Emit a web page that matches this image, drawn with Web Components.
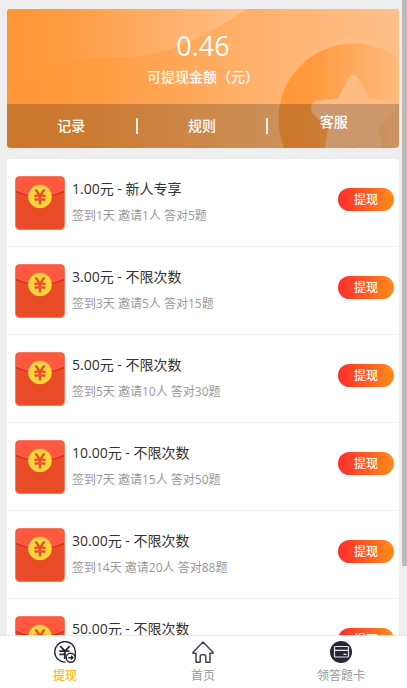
<!DOCTYPE html>
<html lang="zh-CN">
<head>
<meta charset="utf-8">
<meta name="viewport" content="width=device-width, initial-scale=1">
<title>提现</title>
<style>
  body { margin: 0; background: #eee; font-family: "Open Sans", "Noto Sans CJK SC", sans-serif; font-size: 14px; color: #333; }
</style>
</head>
<body>
<cash-app>
  <balance-card amount="0.46" label="可提现金额（元）"></balance-card>
  <cash-list>
    <cash-row heading="1.00元 - 新人专享">签到1天 邀请1人 答对5题</cash-row>
    <cash-row heading="3.00元 - 不限次数">签到3天 邀请5人 答对15题</cash-row>
    <cash-row heading="5.00元 - 不限次数">签到5天 邀请10人 答对30题</cash-row>
    <cash-row heading="10.00元 - 不限次数">签到7天 邀请15人 答对50题</cash-row>
    <cash-row heading="30.00元 - 不限次数">签到14天 邀请20人 答对88题</cash-row>
    <cash-row heading="50.00元 - 不限次数"></cash-row>
  </cash-list>
  <tab-bar slot="footer">
    <tab-item active>
      <svg slot="icon" viewBox="0 0 22 22" width="22" height="22" fill="none" stroke="#292838" stroke-width="1.4" aria-hidden="true">
        <path d="M11.5 21.1A10.3 10.3 0 1 1 21.3 11V16"/>
        <path d="M6.3 5.2L11 10.2L15.7 5.2M5.3 10.2H15.5M5.3 13.4H12M10.8 10.2V18" stroke-width="1.8"/>
        <circle cx="16.7" cy="16.7" r="4.5" fill="#fff"/>
        <path d="M14.2 16.7H18.8M17 14.8L19 16.7L17 18.6"/>
      </svg>提现</tab-item>
    <tab-item>
      <svg slot="icon" viewBox="0 0 22 22" width="22" height="22" fill="none" stroke="#444252" stroke-width="1.5" stroke-linejoin="round" aria-hidden="true">
        <path d="M11 1L1 11.2V12.2H4V21.2H8.2V15.5Q8.2 13.8 9.8 13.8H12.2Q13.8 13.8 13.8 15.5V21.2H18V12.2H21V11.2Z"/>
      </svg>首页</tab-item>
    <tab-item>
      <svg slot="icon" viewBox="0 0 22 22" width="22" height="22" aria-hidden="true">
        <circle cx="11" cy="11" r="11" fill="#26263a"/>
        <rect x="4.5" y="5.5" width="14" height="10.5" rx="1" fill="none" stroke="#e4e6e2" stroke-width="1.2"/>
        <path d="M4.5 9.3H18.5M13.5 13.4H16.5" stroke="#e4e6e2" stroke-width="1.3"/>
      </svg>领答题卡</tab-item>
  </tab-bar>
</cash-app>

<script>
const define = (name, html, setup) => {
  const template = document.createElement('template');
  template.innerHTML = html;
  customElements.define(name, class extends HTMLElement {
    constructor() {
      super();
      this.attachShadow({ mode: 'open' }).append(template.content.cloneNode(true));
    }
    connectedCallback() { if (setup) setup(this, this.shadowRoot); }
  });
};

define('cash-app', `
  <style>
    :host { display: flex; flex-direction: column; height: 100vh; }
    main { flex: 1; min-height: 0; overflow-y: auto; scrollbar-width: none; box-sizing: border-box; padding: 9px 8px 0 7px; }
    .thumb { position: fixed; top: 0; right: 0; width: 5px; height: 82.3%; background: #bbb; z-index: 2; }
  </style>
  <main><slot></slot></main>
  <slot name="footer"></slot>
  <div class="thumb" aria-hidden="true"></div>`);

define('balance-card', `
  <style>
    :host { display: block; position: relative; overflow: hidden; border-radius: 4px; color: #fff; background: #ffa552; }
    .art { position: absolute; inset: 0; width: 100%; height: 100%; }
    .content { position: relative; text-align: center; }
    .top { padding: 19px 0 14px; }
    .amount { font-size: 27px; line-height: 36px; font-weight: 500; }
    .label { font-size: 14px; line-height: 26px; font-weight: 500; }
    nav { display: grid; grid-template-columns: repeat(3, 1fr); height: 44px; background: rgba(0,0,0,.2); align-items: center; }
    button { all: unset; cursor: pointer; line-height: 16px; font-weight: 500; border-right: 2px solid #eee; }
    button:last-child { border: 0; padding-bottom: 8px; }
  </style>
  <svg class="art" viewBox="0 0 392 139" preserveAspectRatio="none" aria-hidden="true">
    <defs>
      <linearGradient id="base"><stop offset="0" stop-color="#ff9636"/><stop offset=".22" stop-color="#ff9b41"/><stop offset=".65" stop-color="#ffb26d"/><stop offset="1" stop-color="#ffc08b"/></linearGradient>
      <linearGradient id="wave" gradientUnits="userSpaceOnUse" x1="0" y1="0" x2="240" y2="0"><stop offset="0" stop-color="#ff9636"/><stop offset=".25" stop-color="#ff9c43"/><stop offset="1" stop-color="#ffc08a"/></linearGradient>
      <linearGradient id="coin" gradientUnits="userSpaceOnUse" x1="271" y1="0" x2="410" y2="0"><stop offset="0" stop-color="#ff9636"/><stop offset=".25" stop-color="#ff9a3f"/><stop offset="1" stop-color="#ffc18c"/></linearGradient>
    </defs>
    <rect width="392" height="139" fill="url(#base)"/>
    <path d="M0 0H239C212 19 168 46 123 48C78 49 50 49 15 77L0 90Z" fill="url(#wave)"/>
    <circle cx="347" cy="110" r="75.500" fill="url(#coin)"/>
    <path d="M341 70Q346 62 352 70L362 89L385 92Q392 96 387 103L372 119L375 139H349Q346 137 343 139H318L321 119L306 105Q301 96 308 92L331 89Z" fill="#ffbd85"/>
  </svg>
  <div class="content">
    <div class="top"><div class="amount"></div><div class="label"></div></div>
    <nav><button type="button">记录</button><button type="button">规则</button><button type="button">客服</button></nav>
  </div>`, (el, root) => {
  root.querySelector('.amount').textContent = el.getAttribute('amount');
  root.querySelector('.label').textContent = el.getAttribute('label');
});

define('cash-list', `
  <style>:host { display: block; margin-top: 11px; background: #fff; border-radius: 4px 4px 0 0; }</style>
  <slot></slot>`);

define('red-packet', `
  <style>:host { display: block; width: 50px; height: 54px; } svg { display: block; }</style>
  <svg viewBox="0 0 50 54" width="50" height="54" aria-hidden="true">
    <rect x=".5" y=".5" width="49" height="53" rx="4" fill="#ea4b29" stroke="#f9795f"/>
    <path d="M1 15.500V4.500Q1 1 4.500 1H45.500Q49 1 49 4.500V15.500Q25 26 1 15.500Z" fill="#ff5840"/>
    <path d="M1 15.500Q25 26 49 15.500" fill="none" stroke="#d32c12" stroke-width="1.300"/>
    <circle cx="25" cy="20.500" r="11.800" fill="#ffd43d"/>
    <path d="M20.500 13.500L25 19.500L29.500 13.500M19.500 19.800H30.500M19.500 23.500H30.500M25 19.500V28.500" fill="none" stroke="#e5532a" stroke-width="2.400"/>
  </svg>`);

define('cash-row', `
  <style>
    :host { display: flex; align-items: flex-start; height: 88px; box-sizing: border-box; padding: 16px 5px 0 8px; border-bottom: 1px solid #eee; }
    red-packet { margin-top: 1px; }
    .text { flex: 1; min-width: 0; margin-left: 7px; }
    h2 { margin: 0; font-size: 14px; line-height: 28px; font-weight: 400; color: #333; }
    p { margin: 0; font-size: 12px; line-height: 26px; color: #999; }
    button { flex: none; width: 56px; height: 23px; margin-top: 13px; padding: 0; border: 0; border-radius: 12px; cursor: pointer;
      font: 500 12px/23px "Open Sans", "Noto Sans CJK SC", sans-serif; color: #fff; background: linear-gradient(90deg, #ff2c2c, #ff8c1a); }
  </style>
  <red-packet></red-packet>
  <div class="text"><h2></h2><p><slot></slot></p></div>
  <button type="button">提现</button>`, (el, root) => {
  root.querySelector('h2').textContent = el.getAttribute('heading');
});

define('tab-bar', `
  <style>
    :host { display: block; flex: none; background: #fff; border-top: 1px solid #e8e8e8; }
    nav { display: flex; justify-content: space-between; height: 52px; padding: 0 36px 0 35px; }
  </style>
  <nav><slot></slot></nav>`);

define('tab-item', `
  <style>
    :host { display: block; width: 60px; }
    a { display: flex; flex-direction: column; align-items: center; padding-top: 5px; color: #999; text-decoration: none; font-size: 12px; line-height: 26px; }
    :host([active]) a { color: #ffb81c; font-weight: 500; }
    ::slotted(svg) { display: block; }
  </style>
  <a href="#"><slot name="icon"></slot><span><slot></slot></span></a>`);
</script>
</body>
</html>
